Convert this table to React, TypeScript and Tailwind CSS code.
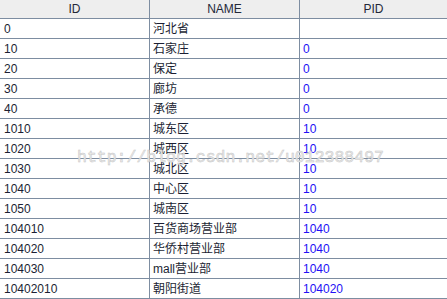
import React from "react";

const rows: [string, string, string][] = [
  ["0", "河北省", ""],
  ["10", "石家庄", "0"],
  ["20", "保定", "0"],
  ["30", "廊坊", "0"],
  ["40", "承德", "0"],
  ["1010", "城东区", "10"],
  ["1020", "城西区", "10"],
  ["1030", "城北区", "10"],
  ["1040", "中心区", "10"],
  ["1050", "城南区", "10"],
  ["104010", "百货商场营业部", "1040"],
  ["104020", "华侨村营业部", "1040"],
  ["104030", "mall营业部", "1040"],
  ["10402010", "朝阳街道", "104020"],
];

export default function App() {
  return (
    <div className="relative w-[447px] h-[299px] overflow-hidden bg-white font-['Liberation_Sans','Noto_Sans_CJK_SC',sans-serif] text-[12px] leading-none">
      <div className="grid grid-cols-[150px_150px_147px] h-[19px] bg-[#eeeeee] border-b border-[#7d8da1] text-[#232838]">
        <div className="flex items-center justify-center border-r border-[#7d8da1]">ID</div>
        <div className="flex items-center justify-center border-r border-[#7d8da1]">NAME</div>
        <div className="flex items-center justify-center">PID</div>
      </div>
      {rows.map(([id, name, pid]) => (
        <div key={id} className="grid grid-cols-[150px_150px_147px] h-[20px] border-b border-[#7d8da1]">
          <div className="flex items-center pl-[4px] border-r border-[#7d8da1] text-[#1c1f33]">{id}</div>
          <div className="flex items-center pl-[3px] border-r border-[#7d8da1] text-[#1c1f33]">{name}</div>
          <div className="flex items-center pl-[3px] text-[#2410f5]">{pid}</div>
        </div>
      ))}
      <div className="absolute left-[77px] top-[150px] font-['Liberation_Mono',monospace] text-[16.5px] leading-none text-[#ececec] [-webkit-text-stroke:0.5px_#c6c6c6] pointer-events-none whitespace-nowrap">
        http://blog.csdn.net/u012388497
      </div>
    </div>
  );
}
